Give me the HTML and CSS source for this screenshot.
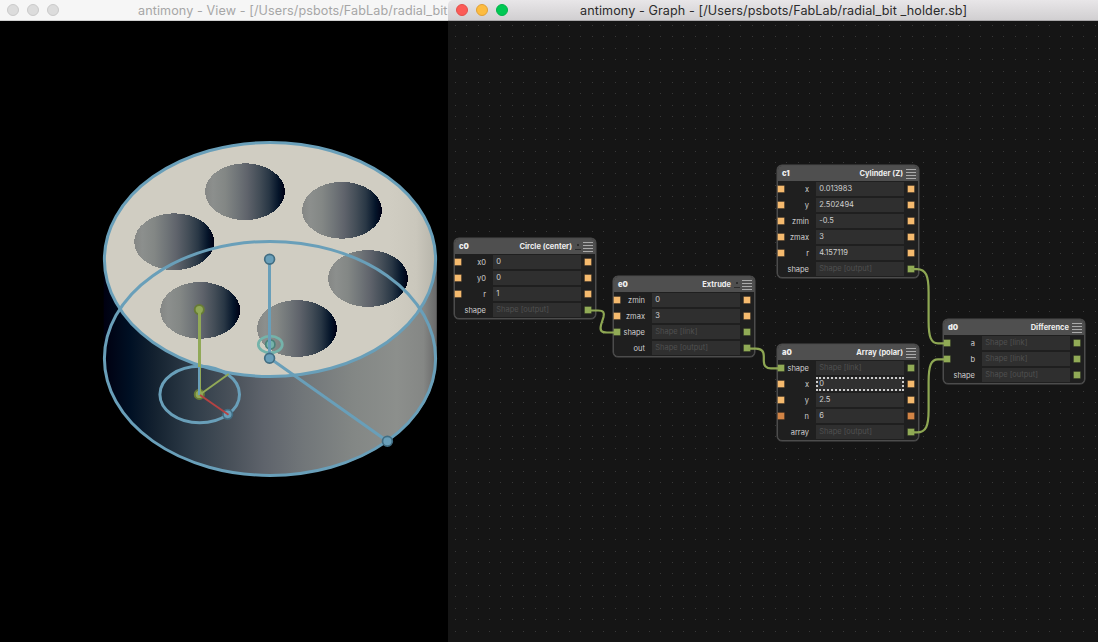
FILE: index.html
```html
<!DOCTYPE html>
<html lang="en">
<head>
<meta charset="utf-8">
<title>antimony</title>
<link rel="stylesheet" href="styles.css">
</head>
<body>
<div class="desktop">
  <section class="window view">
    <header class="titlebar idle"><i class="light"></i><i class="light"></i><i class="light"></i><span class="caption">antimony - View - [/Users/psbots/FabLab/radial_bit</span></header>
    <svg class="scene" viewBox="0 21 448 621" width="448" height="621">
      <defs>
        <linearGradient id="body"><stop offset="0" stop-color="#000010"/><stop offset=".08" stop-color="#001024"/><stop offset=".16" stop-color="#152331"/><stop offset=".27" stop-color="#303d49"/><stop offset=".38" stop-color="#485059"/><stop offset=".48" stop-color="#5e636b"/><stop offset=".6" stop-color="#717679"/><stop offset=".75" stop-color="#838785"/><stop offset=".88" stop-color="#8c8f8c"/><stop offset=".96" stop-color="#858785"/><stop offset="1" stop-color="#686868"/></linearGradient>
        <linearGradient id="hole"><stop offset="0" stop-color="#858785"/><stop offset=".1" stop-color="#8c8f8d"/><stop offset=".25" stop-color="#838785"/><stop offset=".4" stop-color="#707578"/><stop offset=".53" stop-color="#5f636b"/><stop offset=".68" stop-color="#434d57"/><stop offset=".8" stop-color="#293745"/><stop offset=".92" stop-color="#041429"/><stop offset="1" stop-color="#000014"/></linearGradient>
        <linearGradient id="face"><stop offset="0" stop-color="#d0cdc2"/><stop offset=".86" stop-color="#d0cdc2"/><stop offset=".94" stop-color="#cac7bc"/><stop offset="1" stop-color="#b6b4aa"/></linearGradient>
      </defs>
      <path fill="url(#body)" d="M103.7 259.5V358.5A166.5 117.5 0 0 0 436.8 358.5V259.5Z"/>
      <ellipse cx="270" cy="259.5" rx="166" ry="117" fill="url(#face)"/>
      <g fill="url(#hole)" shape-rendering="crispEdges">
        <ellipse cx="245" cy="191.7" rx="40" ry="28.4"/><ellipse cx="342" cy="210.3" rx="40" ry="28.4"/>
        <ellipse cx="174.2" cy="241.7" rx="40" ry="28.4"/><ellipse cx="368" cy="278.5" rx="40" ry="28.4"/>
        <ellipse cx="200.2" cy="310.4" rx="40" ry="28.4"/><ellipse cx="297" cy="328.5" rx="40" ry="28.4"/>
      </g>
      <g fill="none" stroke="#699fb9" stroke-width="3">
        <ellipse cx="270" cy="259.5" rx="165.6" ry="117"/><ellipse cx="270" cy="358.4" rx="165.6" ry="117"/>
        <ellipse cx="199.7" cy="394.5" rx="39.8" ry="28.2"/>
      </g>
      <ellipse cx="270.3" cy="344.4" rx="12" ry="8.3" fill="none" stroke="#74b3aa" stroke-width="2.7"/>
      <circle cx="270.3" cy="344.4" r="4.6" fill="#74b3aa" stroke="#4b8179" stroke-width="1.7"/>
      <path d="M269.5 259V358L387.5 441.3" fill="none" stroke="#699fb9" stroke-width="3"/>
      <g fill="#699fb9" stroke="#416d82" stroke-width="1.7">
        <circle cx="269.6" cy="259.2" r="4.9"/><circle cx="269.6" cy="358.2" r="4.9"/><circle cx="387.4" cy="441.3" r="4.9"/><circle cx="227.7" cy="414.3" r="4.7"/>
      </g>
      <g fill="#91a957" stroke="#677b36" stroke-width="1.9"><circle cx="199.3" cy="309.6" r="4.6"/><circle cx="199.3" cy="394.4" r="4.6"/></g>
      <path d="M199.5 309V394" stroke="#91a957" stroke-width="3"/>
      <path d="M199 367V395" stroke="#699fb9" stroke-width="2"/>
      <path d="M200 394.5L228.7 374" stroke="#91a957" stroke-width="2"/>
      <path d="M200 395L228.5 414.8" stroke="#b44343" stroke-width="2"/>
    </svg>
  </section>

  <section class="window graph">
    <header class="titlebar"><i class="light red"></i><i class="light amber"></i><i class="light green"></i><span class="caption">antimony - Graph - [/Users/psbots/FabLab/radial_bit _holder.sb]</span></header>
    <main class="canvas">
      <svg class="grid" width="650" height="621">
        <defs><pattern id="dots" x="7" y="4" width="80" height="80" patternUnits="userSpaceOnUse">
          <g id="cols" fill="#383838" shape-rendering="crispEdges"><path id="r" d="M0 0h1v1h-1zM11 0h1v1h-1zM23 0h1v1h-1zM34 0h1v1h-1zM45 0h1v1h-1zM57 0h1v1h-1zM68 0h1v1h-1z"/><use href="#r" y="11"/><use href="#r" y="23"/><use href="#r" y="34"/><use href="#r" y="46"/><use href="#r" y="57"/><use href="#r" y="68"/></g>
        </pattern></defs>
        <rect width="650" height="621" fill="url(#dots)"/>
      </svg>

      <article class="node c0"><h2><b>c0</b><span class="kind">Circle (center)</span><i class="show"></i><i class="menu"></i></h2>
        <div class="row"><i class="port"></i><label>x0</label><span class="field">0</span><i class="port"></i></div>
        <div class="row"><i class="port"></i><label>y0</label><span class="field">0</span><i class="port"></i></div>
        <div class="row"><i class="port"></i><label>r</label><span class="field">1</span><i class="port"></i></div>
        <div class="row"><i class="port none"></i><label>shape</label><span class="field dim">Shape [output]</span><i class="port shape"></i></div>
      </article>

      <article class="node e0"><h2><b>e0</b><span class="kind">Extrude</span><i class="show"></i><i class="menu"></i></h2>
        <div class="row"><i class="port"></i><label>zmin</label><span class="field">0</span><i class="port"></i></div>
        <div class="row"><i class="port"></i><label>zmax</label><span class="field">3</span><i class="port"></i></div>
        <div class="row"><i class="port shape"></i><label>shape</label><span class="field dim">Shape [link]</span><i class="port shape"></i></div>
        <div class="row"><i class="port none"></i><label>out</label><span class="field dim">Shape [output]</span><i class="port shape"></i></div>
      </article>

      <article class="node c1"><h2><b>c1</b><span class="kind">Cylinder (Z)</span><i class="menu"></i></h2>
        <div class="row"><i class="port"></i><label>x</label><span class="field">0.013983</span><i class="port"></i></div>
        <div class="row"><i class="port"></i><label>y</label><span class="field">2.502494</span><i class="port"></i></div>
        <div class="row"><i class="port"></i><label>zmin</label><span class="field">-0.5</span><i class="port"></i></div>
        <div class="row"><i class="port"></i><label>zmax</label><span class="field">3</span><i class="port"></i></div>
        <div class="row"><i class="port"></i><label>r</label><span class="field">4.157119</span><i class="port"></i></div>
        <div class="row"><i class="port none"></i><label>shape</label><span class="field dim">Shape [output]</span><i class="port shape"></i></div>
      </article>

      <article class="node a0"><h2><b>a0</b><span class="kind">Array (polar)</span><i class="menu"></i></h2>
        <div class="row"><i class="port shape"></i><label>shape</label><span class="field dim">Shape [link]</span><i class="port shape"></i></div>
        <div class="row"><i class="port"></i><label>x</label><span class="field focus">0</span><i class="port"></i></div>
        <div class="row"><i class="port"></i><label>y</label><span class="field">2.5</span><i class="port"></i></div>
        <div class="row"><i class="port int"></i><label>n</label><span class="field">6</span><i class="port int"></i></div>
        <div class="row"><i class="port none"></i><label>array</label><span class="field dim">Shape [output]</span><i class="port shape"></i></div>
      </article>

      <article class="node d0"><h2><b>d0</b><span class="kind">Difference</span><i class="menu"></i></h2>
        <div class="row"><i class="port shape"></i><label>a</label><span class="field dim">Shape [link]</span><i class="port shape"></i></div>
        <div class="row"><i class="port shape"></i><label>b</label><span class="field dim">Shape [link]</span><i class="port shape"></i></div>
        <div class="row"><i class="port none"></i><label>shape</label><span class="field dim">Shape [output]</span><i class="port shape"></i></div>
      </article>

      <svg class="wires" viewBox="448 21 650 621" width="650" height="621" fill="none" stroke="#8ea753" stroke-width="2.2">
        <path d="M589 310.5H598C604 310.5 604.5 313 603.5 317L601 325C599.5 331 601.5 332.5 607 332.5H615"/>
        <path d="M748 348.6H756Q763.8 348.6 763.8 356V361Q763.8 368.4 771 368.4H779"/>
        <path d="M911 269.2H917C926 269.2 928.6 276 928.6 292V321C928.6 337 931 343.4 938 343.4H945"/>
        <path d="M911 432.4H917C926 432.4 928.6 426 928.6 410V382C928.6 366 931 359.4 938 359.4H945"/>
      </svg>
    </main>
  </section>
</div>
</body>
</html>
```
FILE: styles.css
```css
* { box-sizing: border-box; }
body { margin: 0; background: #f6f6f6; font-family: Inter, "Liberation Sans", sans-serif; }
.desktop { display: flex; width: 1098px; height: 642px; overflow: hidden; }
.window { display: flex; flex-direction: column; overflow: hidden; }
.view { width: 448px; }
.graph { width: 650px; border-top-left-radius: 5px; }

.titlebar { display: flex; align-items: center; height: 21px; flex: none; padding-left: 8px; gap: 8px; background: linear-gradient(#e8e6e8, #d1cfd1); border-bottom: 1px solid #a9a7a9; color: #2b2b2b; }
.titlebar.idle { padding-left: 7px; background: #f6f6f6; border-bottom-color: #d0d0d0; color: #a6a6a6; }
.light { width: 12px; height: 12px; flex: none; border-radius: 50%; background: #dcdcdc; border: 1px solid #cacaca; }
.red { background: #fc5b57; border-color: #e2504c; }
.amber { background: #fdbc40; border-color: #e0a035; }
.green { background: #00c853; border-color: #00b34a; }
.caption { font-size: 12.6px; letter-spacing: 0.095px; line-height: 20px; white-space: nowrap; margin-left: 64px; padding-top: 1px; }
.idle .caption { margin-left: 71px; }

.scene { display: block; background: #000; }
.canvas { position: relative; flex: 1; background: #151515; }
.grid { display: block; }
.wires { position: absolute; left: 0; top: 0; }

.node { position: absolute; width: 142px; border: 1px solid #4c4c4c; border-radius: 5px; box-shadow: 0 0 0 0.5px #4c4c4c; background: #1f1f1f; color: #d0d0d0; font-size: 7.5px; }
.c0 { left: 6px; top: 217px; }
.e0 { left: 165px; top: 255px; }
.c1 { left: 329px; top: 144px; }
.a0 { left: 329px; top: 323px; }
.d0 { left: 495px; top: 298px; }
.node h2 { display: flex; align-items: center; height: 15px; margin: 0; padding: 0 2px 0 4px; border-radius: 4px 4px 0 0; background: #4f4f4f; color: #eee; font-size: 7.5px; font-weight: 700; }
.kind { margin-left: auto; }
.menu { width: 10px; height: 10px; margin-left: 3px; background: repeating-linear-gradient(#aaa 0 1px, #4f4f4f 1px 3px); }
.show { width: 6px; height: 7px; margin-left: 3px; margin-right: -1px; border-bottom: 1px solid #2c2c2c; background: radial-gradient(circle at 50% 30%, #2c2c2c 1px, transparent 1.4px); }

.row { display: flex; align-items: center; height: 16px; }
.port { width: 6px; height: 6px; flex: none; background: #f5ba6e; box-shadow: 0 0 0 0.5px #b08450; }
.port.shape { background: #91ab56; box-shadow: 0 0 0 0.5px #6c8040; }
.port.int { background: #d28445; box-shadow: 0 0 0 0.5px #a26534; }
.port.none { visibility: hidden; }
.row label { width: 25px; text-align: right; white-space: nowrap; }
.field { width: 88px; height: 14px; margin: 0 4px 0 7px; padding-left: 3.2px; line-height: 14px; background: #2f2f2f; white-space: nowrap; }
.field.dim { color: #505050; }
.field.focus { outline: 2px dotted #ccc; outline-offset: -2px; }
```
